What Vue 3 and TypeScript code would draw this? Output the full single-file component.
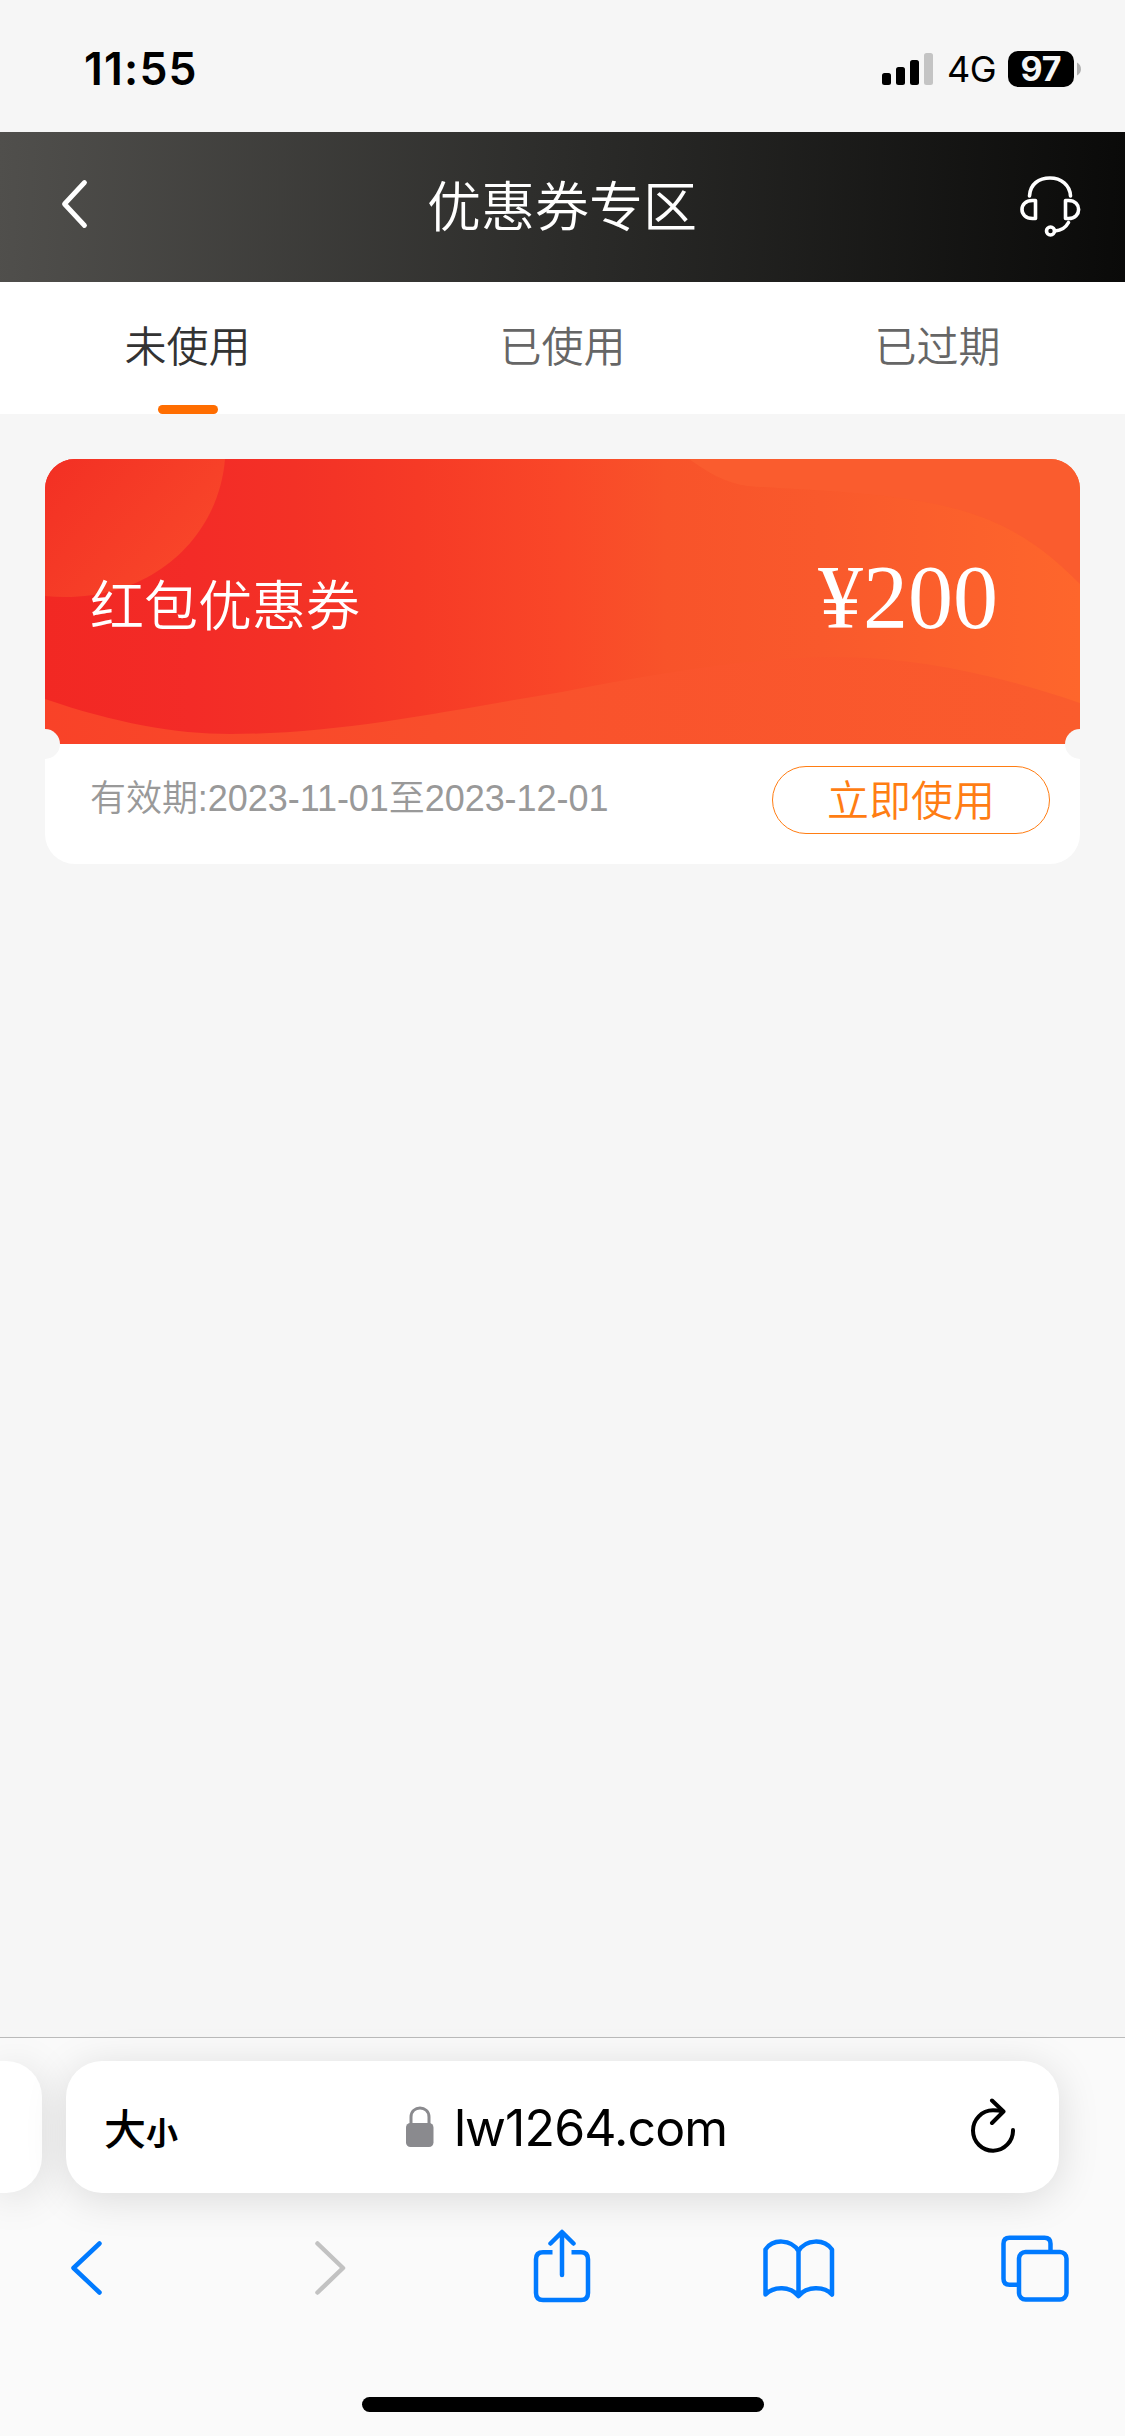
<script setup lang="ts">
import { ref } from 'vue'

interface Coupon {
  name: string
  amount: number
  from: string
  to: string
}

const tabs: string[] = ['未使用', '已使用', '已过期']
const active = ref(0)
const coupons: Coupon[] = [{ name: '红包优惠券', amount: 200, from: '2023-11-01', to: '2023-12-01' }]
</script>

<template>
  <div class="screen">
    <div class="status">
      <span class="time">11:55</span>
      <div class="status-right">
        <svg class="signal" width="52" height="32" viewBox="0 0 52 32">
          <rect x="0" y="20" width="9" height="12" rx="2.5" />
          <rect x="14" y="14" width="9" height="18" rx="2.5" />
          <rect x="28" y="7" width="9" height="25" rx="2.5" />
          <rect x="42" y="0" width="9" height="32" rx="2.5" fill="#c4c4c4" />
        </svg>
        <span class="network">4G</span>
        <span class="battery">97</span>
        <svg width="5" height="14" viewBox="0 0 5 14"><path d="M0 0.5C5.3 3 5.3 11 0 13.5Z" fill="#b0b0b0" /></svg>
      </div>
    </div>

    <header class="header">
      <svg class="back" width="32" height="56" viewBox="0 0 32 56">
        <path d="M26.500 6.500L6.500 28L26.500 49.500" fill="none" stroke="#fff" stroke-width="4.800" stroke-linecap="round" stroke-linejoin="round" />
      </svg>
      <h1 class="title">优惠券专区</h1>
      <svg class="service" width="62" height="62" viewBox="0 0 62 62" fill="none" stroke="#fff" stroke-width="3.600" stroke-linecap="round" stroke-linejoin="round">
        <path d="M9.500 20C10 8 19 2 30 2C41 2 50 9 50.500 20" />
        <path d="M15.500 24.500V42.500H12.500C-1.500 42.500 -1.500 24.500 12.500 24.500Z" />
        <path d="M45.500 24.500V42.500H48.500C62 42.500 62 24.500 48.500 24.500Z" />
        <path d="M48.500 46.500C45.500 52 42 54.500 35 55" />
        <circle cx="30.500" cy="55" r="4" />
      </svg>
    </header>

    <nav class="tabs">
      <button v-for="(tab, i) in tabs" :key="tab" class="tab" :class="{ active: i === active }" @click="active = i">{{ tab }}</button>
    </nav>

    <main class="content">
      <article v-for="c in coupons" :key="c.name" class="coupon">
        <div class="coupon-top">
          <svg class="waves" width="1035" height="285" viewBox="0 0 1035 285" preserveAspectRatio="none">
            <defs>
              <linearGradient id="base">
                <stop offset="0" stop-color="#f22823" />
                <stop offset=".14" stop-color="#f32b27" />
                <stop offset=".24" stop-color="#f33126" />
                <stop offset=".36" stop-color="#f63a26" />
                <stop offset=".5" stop-color="#f94728" />
                <stop offset=".6" stop-color="#f8532a" />
                <stop offset=".75" stop-color="#f9592c" />
                <stop offset="1" stop-color="#fe662c" />
              </linearGradient>
              <linearGradient id="disc" gradientUnits="userSpaceOnUse" x1="10" y1="10" x2="130" y2="110">
                <stop offset="0" stop-color="#f33124" />
                <stop offset="1" stop-color="#f84529" />
              </linearGradient>
              <linearGradient id="wave">
                <stop offset="0" stop-color="#f94228" />
                <stop offset=".5" stop-color="#f9522c" />
                <stop offset="1" stop-color="#fa5c2d" />
              </linearGradient>
            </defs>
            <rect width="1035" height="285" fill="url(#base)" />
            <path d="M0 0H180C174 75 112 138 20 138Q10 138 0 137Z" fill="url(#disc)" />
            <path d="M0 240C70 264 130 275 185 275C300 275 410 250 517 233C610 215 710 198 790 198C870 198 950 215 1035 244V285H0Z" fill="url(#wave)" />
            <path d="M644 0C662 13 680 24 702 27C750 31 830 32 895 46C955 59 995 84 1035 125V0Z" fill="#fa5c2e" />
          </svg>
          <span class="name">{{ c.name }}</span>
          <span class="amount">¥{{ c.amount }}</span>
        </div>
        <div class="coupon-bottom">
          <span class="date">有效期:{{ c.from }}至{{ c.to }}</span>
          <button class="use">立即使用</button>
        </div>
      </article>
    </main>

    <footer class="browser">
      <div class="address-row">
        <div class="neighbor"></div>
        <div class="address">
          <span class="size"><b class="big">大</b><b class="small">小</b></span>
          <span class="domain">
            <svg width="28" height="42" viewBox="0 0 28 42">
              <path d="M5 18V11C5 -1 23 -1 23 11V18" fill="none" stroke="#8a8a8e" stroke-width="3" />
              <rect x="0" y="17" width="27.500" height="24" rx="4.500" fill="#8a8a8e" />
            </svg>
            <span class="url">lw1264.com</span>
          </span>
          <svg class="reload" width="46" height="56" viewBox="0 0 46 56" fill="none" stroke="#000" stroke-width="4" stroke-linecap="round" stroke-linejoin="round">
            <path d="M34 13.500C31 12.600 28 12.300 24 12.300A20 20.200 0 1 0 44 32" />
            <path d="M23 2.500L34.500 13.500L23 25" />
          </svg>
        </div>
      </div>
      <div class="toolbar">
        <svg class="prev" width="32" height="56" viewBox="0 0 32 56"><path d="M28.500 3.500L2.500 28L28.500 52.500" /></svg>
        <svg class="next" width="32" height="56" viewBox="0 0 32 56"><path d="M3.500 3.500L29 28L3.500 52.500" /></svg>
        <svg class="share" width="58" height="74" viewBox="0 0 58 74">
          <path d="M19.500 23.300H10Q3 23.300 3 30.300V64Q3 71 10 71H48Q55 71 55 64V30.300Q55 23.300 48 23.300H38.500" stroke-linecap="butt" />
          <path d="M29 46V3.500M17.500 14.500L29 3L40.500 14.500" />
        </svg>
        <svg class="book" width="72" height="62" viewBox="0 0 72 62"><path d="M35.500 14C28 2 10 1.500 2.500 12.500V57.500C11 49 27 49 35.500 59C44 49 61 49 69 57.500V12.500C61 1.500 43 2 35.500 14V59" /></svg>
        <svg class="pages" width="68" height="68" viewBox="0 0 68 68">
          <path d="M49.500 17V9.800Q49.500 3.800 43.500 3.800H8.500Q2.500 3.800 2.500 9.800V44.800Q2.500 50.800 8.500 50.800H17" stroke-linecap="butt" />
          <rect x="18" y="18" width="47.500" height="47.500" rx="6.500" />
        </svg>
      </div>
      <div class="home"></div>
    </footer>
  </div>
</template>

<style>
body {
  margin: 0;
}
</style>

<style scoped>
.screen {
  width: 1125px;
  height: 2436px;
  display: flex;
  flex-direction: column;
  overflow: hidden;
  background: #f6f6f6;
  font-family: "Liberation Sans", "Noto Sans CJK SC DemiLight", "Noto Sans CJK SC", sans-serif;
  font-weight: 350;
}
button {
  border: 0;
  padding: 0;
  background: none;
  font: inherit;
}
.status {
  height: 132px;
  display: flex;
  justify-content: space-between;
  padding: 0 43px 0 84px;
  font-family: Inter, sans-serif;
  color: #000;
}
.time {
  font-size: 44.500px;
  font-weight: 600;
  line-height: 139px;
  letter-spacing: 1.2px;
}
.status-right {
  display: flex;
  align-items: center;
  height: 138px;
}
.network {
  margin-left: 13px;
  width: 48px;
  font-size: 36px;
  font-weight: 400;
  letter-spacing: -0.5px;
}
.battery {
  width: 66px;
  height: 36px;
  margin: 0 3px 0 13px;
  border-radius: 10px;
  background: #000;
  color: #f6f6f6;
  font-size: 34px;
  font-weight: 700;
  line-height: 36px;
  text-align: center;
}
.header {
  height: 150px;
  display: flex;
  align-items: center;
  justify-content: space-between;
  padding: 0 43px 0 58px;
  background: linear-gradient(92deg, #504f4c 0%, #2c2c2a 50%, #0a0a09 100%);
}
.back {
  margin-bottom: 6px;
}
.title {
  margin: 0 0 8px 14px;
  color: #fff;
  font-size: 54px;
  font-weight: inherit;
}
.tabs {
  height: 132px;
  display: flex;
  background: #fff;
}
.tab {
  position: relative;
  flex: 1;
  color: #666;
  font-size: 42px;
  line-height: 130px;
}
.tab.active {
  color: #333;
}
.tab.active::after {
  content: "";
  position: absolute;
  left: 50%;
  bottom: 0;
  width: 60px;
  height: 9px;
  margin-left: -30px;
  border-radius: 4.500px;
  background: #ff6d00;
}
.content {
  flex: 1;
  padding: 45px;
}
.coupon {
  position: relative;
  height: 405px;
  border-radius: 30px;
  overflow: hidden;
  background: #fff;
}
.coupon::before,
.coupon::after {
  content: "";
  position: absolute;
  z-index: 2;
  top: 270px;
  left: -15px;
  width: 30px;
  height: 30px;
  border-radius: 50%;
  background: #f6f6f6;
}
.coupon::after {
  left: auto;
  right: -15px;
}
.coupon-top {
  position: relative;
  height: 285px;
  display: flex;
  align-items: center;
  justify-content: space-between;
  padding: 0 82px 0 45px;
  box-sizing: border-box;
  color: #fff;
}
.waves {
  position: absolute;
  inset: 0;
}
.name {
  position: relative;
  margin-top: 2px;
  font-size: 54px;
}
.amount {
  position: relative;
  margin-bottom: 9px;
  font-family: "Liberation Serif", serif;
  font-size: 90px;
  font-weight: 400;
}
.coupon-bottom {
  height: 120px;
  display: flex;
  justify-content: space-between;
  align-items: flex-start;
  padding: 22px 30px 0 45px;
  box-sizing: border-box;
}
.date {
  color: #999;
  font-size: 36px;
  line-height: 66px;
  letter-spacing: -0.05px;
}
.use {
  width: 278px;
  height: 68px;
  box-sizing: border-box;
  padding-top: 3px;
  border: 1px solid #ff7d13;
  border-radius: 34px;
  color: #ff7d13;
  font-size: 42px;
  line-height: 63px;
}
.browser {
  height: 399px;
  box-sizing: border-box;
  border-top: 1px solid #bbb;
  background: #fafafa;
  display: flex;
  flex-direction: column;
}
.address-row {
  display: flex;
  margin-top: 23px;
  gap: 24px;
}
.neighbor,
.address {
  height: 132px;
  background: #fff;
  box-shadow: 0 6px 42px rgba(0, 0, 0, 0.13);
}
.neighbor {
  width: 42px;
  border-radius: 0 36px 36px 0;
}
.address {
  width: 993px;
  box-sizing: border-box;
  padding: 0 44px 0 38px;
  border-radius: 36px;
  display: flex;
  align-items: center;
  justify-content: space-between;
}
.size {
  display: flex;
  align-items: baseline;
  font-family: "Noto Sans CJK SC", sans-serif;
  line-height: 1;
}
.big {
  font-size: 42px;
  font-weight: 500;
}
.small {
  font-size: 32px;
  font-weight: 700;
}
.domain {
  display: flex;
  align-items: center;
  gap: 20px;
  margin-right: 14px;
}
.url {
  position: relative;
  top: 1px;
  font-family: Inter, sans-serif;
  font-size: 50px;
  font-weight: 400;
  letter-spacing: -0.9px;
}
.reload {
  margin-bottom: 3px;
}
.toolbar {
  display: flex;
  align-items: center;
  height: 75px;
  margin-top: 37px;
  padding-left: 71px;
}
.toolbar svg {
  flex: none;
  fill: none;
  stroke: #007aff;
  stroke-width: 4.500;
  stroke-linecap: round;
  stroke-linejoin: round;
}
.toolbar .next {
  margin-left: 211px;
  stroke: #c2c2c2;
}
.share {
  margin: 0 0 3px 187px;
}
.book {
  margin-left: 172px;
}
.pages {
  margin-left: 166px;
}
.home {
  width: 402px;
  height: 15px;
  margin: 92px auto 0;
  border-radius: 8px;
  background: #000;
}
</style>
